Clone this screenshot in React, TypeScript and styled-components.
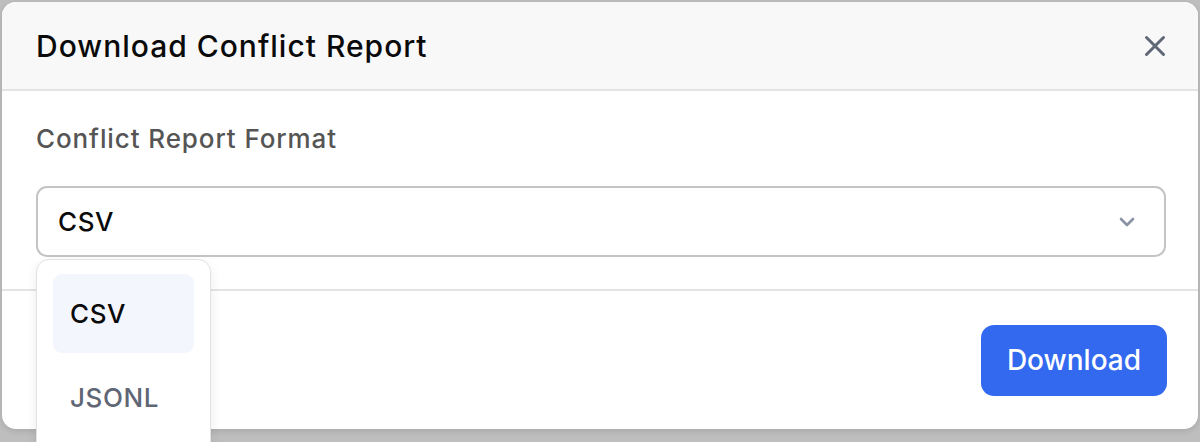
import React from "react";
import styled, { createGlobalStyle } from "styled-components";

const Global = createGlobalStyle`
  html, body { margin: 0; padding: 0; }
  body {
    background: #bebebe;
    font-family: Inter, "Noto Sans", sans-serif;
    -webkit-font-smoothing: antialiased;
  }
`;

const Page = styled.div`
  width: 1200px;
  height: 442px;
  box-sizing: border-box;
  padding: 2px 2px 0 2px;
  overflow: hidden;
`;

const Modal = styled.div`
  width: 1196px;
  height: 427px;
  box-sizing: border-box;
  background: #ffffff;
  border-radius: 14px;
  box-shadow: 0 2px 6px rgba(0, 0, 0, 0.12);
  display: flex;
  flex-direction: column;
  position: relative;
`;

const Header = styled.div`
  height: 87px;
  flex-shrink: 0;
  background: #f8f8f8;
  border-bottom: 2px solid #e4e4e7;
  border-radius: 14px 14px 0 0;
  display: flex;
  align-items: center;
  justify-content: space-between;
  padding: 0 27px 0 34px;
`;

const Title = styled.h2`
  margin: 0;
  font-size: 30px;
  font-weight: 500;
  color: #0a0a0a;
  letter-spacing: 1px;
`;

const CloseButton = styled.button`
  border: none;
  background: none;
  padding: 0;
  width: 32px;
  height: 32px;
  display: flex;
  align-items: center;
  justify-content: center;
  color: #5f6675;
  cursor: pointer;
`;

const Body = styled.div`
  flex-shrink: 0;
  padding: 31px 32px 32px 34px;
  border-bottom: 2px solid #e4e4e7;
  display: flex;
  flex-direction: column;
  gap: 30px;
`;

const Label = styled.div`
  font-size: 26px;
  font-weight: 500;
  color: #555555;
  line-height: 34px;
  letter-spacing: 0.9px;
`;

const SelectWrap = styled.div`
  position: relative;
`;

const SelectBox = styled.div`
  height: 71px;
  box-sizing: border-box;
  border: 2px solid #c4c4c4;
  border-radius: 11px;
  display: flex;
  align-items: center;
  justify-content: space-between;
  padding: 0 28px 0 20px;
  font-size: 26px;
  font-weight: 500;
  letter-spacing: 0.6px;
  color: #0a0a0a;
`;

const Menu = styled.div`
  position: absolute;
  top: calc(100% + 2px);
  left: 0;
  width: 175px;
  box-sizing: border-box;
  background: #ffffff;
  border: 1.5px solid #e2e2e2;
  border-radius: 13px;
  box-shadow: 0 4px 12px rgba(0, 0, 0, 0.08);
  padding: 14px 16px 30px 16px;
  display: flex;
  flex-direction: column;
  gap: 5px;
  z-index: 2;
`;

const MenuItem = styled.div<{ $active?: boolean }>`
  height: 79px;
  border-radius: 9px;
  display: flex;
  align-items: center;
  padding-left: 17px;
  font-size: 26px;
  font-weight: 500;
  letter-spacing: 0.6px;
  background: ${(p) => (p.$active ? "#f3f6fd" : "transparent")};
  color: ${(p) => (p.$active ? "#0a0a0a" : "#5f6675")};
`;

const Footer = styled.div`
  flex: 1;
  display: flex;
  align-items: center;
  justify-content: flex-end;
  padding: 0 31px 0 34px;
`;

const PrimaryButton = styled.button`
  width: 186px;
  height: 71px;
  border: none;
  border-radius: 13px;
  background: #3369ef;
  color: #ffffff;
  font-family: Inter, "Noto Sans", sans-serif;
  font-size: 28px;
  font-weight: 500;
  cursor: pointer;
`;

export default function App() {
  return (
    <>
      <Global />
      <Page>
        <Modal>
          <Header>
            <Title>Download Conflict Report</Title>
            <CloseButton aria-label="Close">
              <svg width="22" height="22" viewBox="0 0 22 22" fill="none">
                <path
                  d="M2.5 2.5L19.5 19.5M19.5 2.5L2.5 19.5"
                  stroke="currentColor"
                  strokeWidth="3"
                  strokeLinecap="round"
                />
              </svg>
            </CloseButton>
          </Header>
          <Body>
            <Label>Conflict Report Format</Label>
            <SelectWrap>
              <SelectBox>
                <span>CSV</span>
                <svg width="18" height="12" viewBox="0 0 18 12" fill="none">
                  <path
                    d="M3 3L9 9L15 3"
                    stroke="#8a93a3"
                    strokeWidth="2.6"
                    strokeLinecap="round"
                    strokeLinejoin="round"
                  />
                </svg>
              </SelectBox>
              <Menu>
                <MenuItem $active>CSV</MenuItem>
                <MenuItem>JSONL</MenuItem>
              </Menu>
            </SelectWrap>
          </Body>
          <Footer>
            <PrimaryButton>Download</PrimaryButton>
          </Footer>
        </Modal>
      </Page>
    </>
  );
}
